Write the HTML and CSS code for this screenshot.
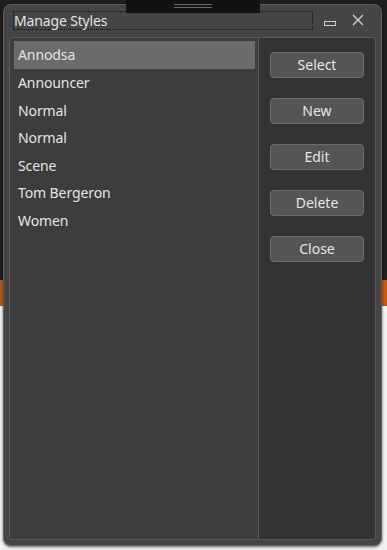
FILE: index.html
```html
<!DOCTYPE html>
<html>
<head>
<meta charset="utf-8">
<link rel="stylesheet" href="styles.css">
</head>
<body>
<div class="grip"><span></span><span></span></div>
<div class="window">
  <div class="titlebar">
    <div class="title">Manage Styles</div>
    <div class="controls">
      <span class="min"></span>
      <svg class="close" width="12" height="12" viewBox="0 0 12 12"><path d="M1 1L11 11M11 1L1 11" stroke="#d8d8d8" stroke-width="1.3" fill="none"/></svg>
    </div>
  </div>
  <div class="content">
    <ul class="list">
      <li class="selected">Annodsa</li>
      <li>Announcer</li>
      <li>Normal</li>
      <li>Normal</li>
      <li>Scene</li>
      <li>Tom Bergeron</li>
      <li>Women</li>
    </ul>
    <div class="actions">
      <button class="btn">Select</button>
      <button class="btn">New</button>
      <button class="btn">Edit</button>
      <button class="btn">Delete</button>
      <button class="btn">Close</button>
    </div>
  </div>
</div>
</body>
</html>
```
FILE: styles.css
```css
html, body {
  margin: 0;
  padding: 0;
}
body {
  width: 387px;
  height: 550px;
  overflow: hidden;
  position: relative;
  font-family: "Noto Sans", "Open Sans", sans-serif;
  background: linear-gradient(to bottom, #1e1e1e 0, #1e1e1e 280px, #c45a10 280px, #c45a10 306px, #f2f2f2 306px, #f2f2f2 100%);
  padding-top: 4px;
  padding-left: 3px;
  box-sizing: border-box;
}
.grip {
  position: absolute;
  left: 126px;
  top: 0;
  width: 134px;
  height: 13px;
  background: #111111;
  z-index: 2;
  display: flex;
  flex-direction: column;
  align-items: center;
  padding-top: 4px;
  box-sizing: border-box;
  gap: 2px;
}
.grip span {
  display: block;
  width: 38px;
  height: 1px;
  background: #6a6a6a;
}
.window {
  width: 379px;
  height: 542px;
  box-sizing: border-box;
  border: 1px solid #5e5e5e;
  border-radius: 8px;
  background: #454545;
  padding: 0 5px 5px 5px;
  display: flex;
  flex-direction: column;
  box-shadow: 0 1px 3px rgba(0,0,0,0.6);
}
.titlebar {
  height: 32px;
  display: flex;
  align-items: flex-start;
  padding-top: 6px;
  box-sizing: border-box;
  padding-left: 4px;
}
.title {
  width: 300px;
  height: 19px;
  box-sizing: border-box;
  border: 1px dotted #111;
  color: #e2e2e2;
  font-size: 14px;
  line-height: 17px;
  padding-left: 0;
  letter-spacing: -0.15px;
}
.controls {
  display: flex;
  align-items: center;
  margin-left: 11px;
  height: 19px;
}
.min {
  display: block;
  width: 12px;
  height: 5px;
  border: 1px solid #d0d0d0;
  box-sizing: border-box;
  margin-top: 6px;
}
.close {
  margin-left: 16px;
  margin-top: -2px;
}
.content {
  flex: 1;
  display: flex;
  border: 1px solid #5a5a5a;
  border-radius: 3px;
  overflow: hidden;
}
.list {
  list-style: none;
  margin: 0;
  padding: 3px 3px 0 4px;
  width: 249px;
  box-sizing: border-box;
  background: #3d3d3d;
  border-right: 1px solid #585858;
}
.list li {
  height: 27.5px;
  line-height: 27.5px;
  padding-left: 4px;
  color: #e4e4e4;
  font-size: 14px;
  letter-spacing: -0.1px;
}
.list li.selected {
  background: #6b6b6b;
  height: 28px;
  line-height: 28px;
}
.actions {
  flex: 1;
  background: #333333;
  display: flex;
  flex-direction: column;
  align-items: center;
  padding-top: 14px;
  gap: 20px;
}
.btn {
  width: 94px;
  height: 26px;
  background: #555555;
  border: 1px solid #6e6e6e;
  border-radius: 4px;
  color: #e6e6e6;
  font-family: "Noto Sans", "Open Sans", sans-serif;
  font-size: 14px;
  padding: 0;
  line-height: 22px;
}
```
